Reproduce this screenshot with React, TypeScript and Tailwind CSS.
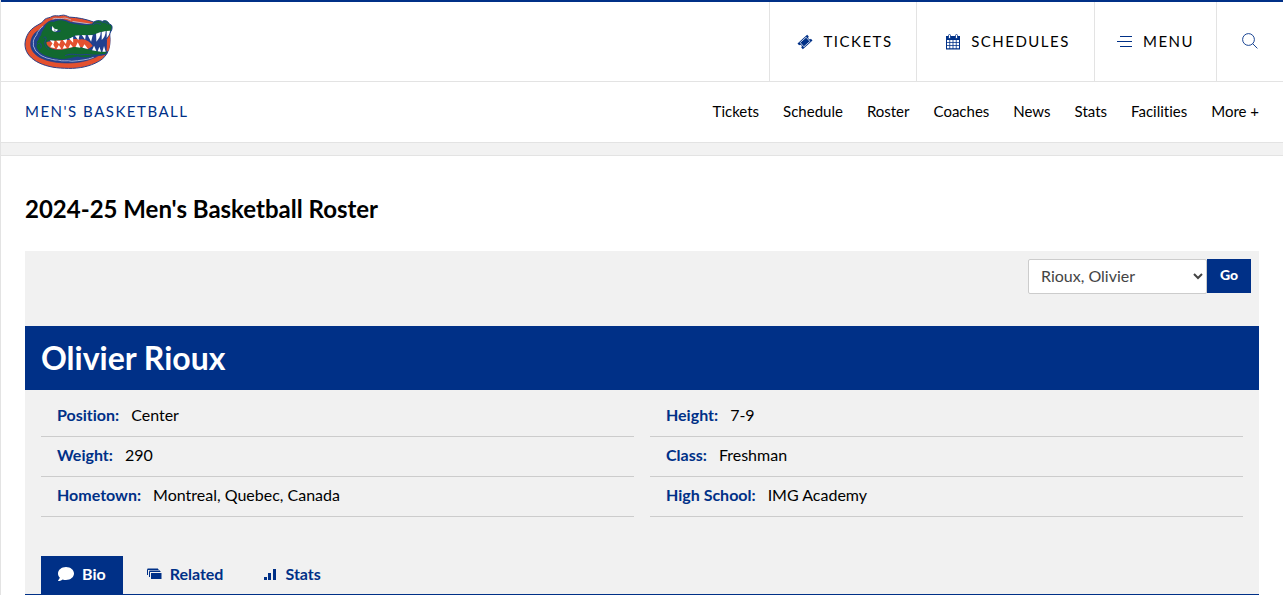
import { useState } from 'react';
import { FaComment } from 'react-icons/fa';

const subNav = [
  'Tickets',
  'Schedule',
  'Roster',
  'Coaches',
  'News',
  'Stats',
  'Facilities',
  'More +',
];

const details = [
  { label: 'Position', value: 'Center' },
  { label: 'Height', value: '7-9' },
  { label: 'Weight', value: '290' },
  { label: 'Class', value: 'Freshman' },
  { label: 'Hometown', value: 'Montreal, Quebec, Canada' },
  { label: 'High School', value: 'IMG Academy' },
];

function GatorLogo() {
  return (
    <svg viewBox="26 16 268 168" className="h-14 w-[89px]" aria-hidden="true">
      {/* Ring */}
      <path
        d="M29 106 C30 82 44 62 62 52 C76 44 84 40 88 32 C96 26 104 28 110 23 C120 18 128 24 138 20 C148 17 156 22 162 25 C188 26 212 31 236 40 L284 74 C290 128 272 150 240 164 C212 177 180 181 148 179 C82 178 28 150 29 106 Z"
        fill="#e4512f"
        stroke="#2b3f87"
        strokeWidth="3"
      />
      <path
        d="M46 106 C47 86 56 72 72 64 C84 54 90 44 104 37 C126 28 148 32 166 40 L230 48 L268 90 C272 124 260 140 234 149 C206 161 176 164 148 163 C90 161 46 142 46 106 Z"
        fill="#22408f"
        stroke="#2b3f87"
        strokeWidth="2"
      />
      {/* Scales along the back of the head */}
      <path
        d="M84 52 C74 58 72 66 66 72 C66 80 58 84 56 92 C52 98 56 104 54 112 C60 120 58 128 68 132 C74 142 86 144 94 148 C108 150 116 156 128 154 C142 160 156 154 170 158 C192 156 216 154 236 146"
        fill="none"
        stroke="#b9c6e2"
        strokeWidth="2.500"
      />
      <path
        d="M112 31 C124 25 132 33 142 29 C152 26 160 31 168 34 M172 38 L226 46"
        fill="none"
        stroke="#b9c6e2"
        strokeWidth="2.500"
      />
      {/* Head and lower jaw */}
      <path
        d="M90 50 C98 38 106 36 116 38 C130 31 146 31 162 41 C184 46 210 50 232 46 C236 36 250 33 262 38 C270 32 280 38 283 46 C291 47 293 54 290 64 L284 74 L276 92 L276 134 C270 140 256 140 240 140 C222 150 204 149 188 145 C166 149 146 156 126 151 C100 148 72 138 66 122 C58 112 66 106 64 98 C72 94 68 84 76 80 C76 68 84 64 90 50 Z"
        fill="#12692f"
        stroke="#22408f"
        strokeWidth="3"
      />
      {/* Mouth */}
      <path
        d="M96 99 C104 92 112 96 122 98 C138 98 146 94 158 91 C170 88 174 79 192 80 C214 78 232 82 248 73 C264 66 276 70 288 65 L274 129 C256 130 232 126 214 121 C196 114 184 113 170 116 C150 121 134 126 118 123 C102 118 92 110 96 99 Z"
        fill="#22408f"
      />
      <path
        d="M94 100 C116 96 138 94 160 94 C184 88 190 94 200 92 C218 94 226 102 233 112 L218 122 C198 113 182 113 164 118 C146 123 130 125 118 122 C102 118 92 109 94 100 Z"
        fill="#e4512f"
      />
      {/* Upper teeth */}
      <path
        d="M104 95 L118 96 L115 108 Z M123 96 L137 96 L132 107 Z M143 95 L156 92 L152 106 Z M162 90 L174 84 L174 102 Z M179 81 L193 80 L190 95 Z M200 79 L212 80 L210 93 Z M218 80 L233 79 L228 99 Z M243 75 L257 70 C257 83 251 91 244 99 Z M260 70 L272 67 C272 79 267 88 260 94 Z M275 67 L285 66 C284 76 280 82 275 88 Z"
        fill="#fff"
      />
      {/* Lower teeth */}
      <path
        d="M105 116 L112 104 L120 119 Z M124 121 L131 109 L138 120 Z M142 120 L148 108 L155 118 Z M160 118 L166 106 L173 115 Z M181 115 L188 101 L196 117 Z M202 117 L208 107 L219 121 Z M231 125 L237 111 L244 127 Z M248 128 L253 114 L258 129 Z M262 129 L267 112 L272 129 Z"
        fill="#fff"
      />
      {/* Ring in front of the open jaw */}
      <path
        d="M276 92 L284 78 C287 96 286 112 280 126 L275 128 Z"
        fill="#e4512f"
      />
      {/* Eye */}
      <path
        d="M106 54 C110 66 122 72 136 66"
        fill="none"
        stroke="#22408f"
        strokeWidth="4"
      />
      <path d="M111 52 L118 60 L128 62 C126 70 112 71 110 62 Z" fill="#fff" />
      <circle cx="119" cy="64" r="2" fill="#22408f" />
      {/* Nostrils, jaw lines and cheek */}
      <path
        d="M234 49 C240 40 248 44 257 47 M260 42 C266 37 274 42 279 47 M67 107 C74 98 82 110 76 119 M84 89 C90 80 96 88 90 97 C86 105 92 116 102 123 M150 141 C170 132 186 141 204 138 C226 136 242 144 266 137"
        fill="none"
        stroke="#22408f"
        strokeWidth="3"
      />
    </svg>
  );
}

function TicketIcon() {
  return (
    <svg viewBox="0 0 16 16" className="h-4 w-4" aria-hidden="true">
      <g transform="rotate(-42 8 8)">
        <path
          d="M1.500 4h13v2.400a1.600 1.600 0 0 0 0 3.200V12h-13V9.600a1.600 1.600 0 0 0 0-3.200z"
          fill="#003087"
        />
        <path d="M4 5.200h8v5.600H4z" fill="none" stroke="#fff" strokeWidth="0.700" />
      </g>
    </svg>
  );
}

function CalendarIcon() {
  return (
    <svg viewBox="0 0 16 16" className="h-4 w-4" aria-hidden="true">
      <path d="M1 2h14v13.500H1z" fill="#003087" />
      <path
        d="M2 6h2.400v2.300H2zM5.200 6h2.400v2.300H5.200zM8.400 6h2.400v2.300H8.400zM11.600 6H14v2.300h-2.400zM2 9h2.400v2.300H2zM5.200 9h2.400v2.300H5.200zM8.400 9h2.400v2.300H8.400zM11.600 9H14v2.300h-2.400zM2 12h2.400v2.300H2zM5.200 12h2.400v2.300H5.200zM8.400 12h2.400v2.300H8.400zM11.600 12H14v2.300h-2.400z"
        fill="#fff"
      />
      <path
        d="M3.500 1.500a1 1 0 0 1 2 0v2a1 1 0 0 1-2 0zM10.500 1.500a1 1 0 0 1 2 0v2a1 1 0 0 1-2 0z"
        fill="#fff"
        stroke="#003087"
        strokeWidth="0.800"
      />
    </svg>
  );
}

function MenuIcon() {
  return (
    <svg viewBox="0 0 16 12" className="h-3 w-4" aria-hidden="true">
      <path d="M3 .5h12M0 5.500h15M3 10.500h12" stroke="#003087" fill="none" />
    </svg>
  );
}

function SearchIcon() {
  return (
    <svg viewBox="0 0 16 16" className="h-4 w-4" aria-hidden="true">
      <g fill="none" stroke="#003087" strokeWidth="0.900">
        <circle cx="6.500" cy="6.500" r="5.900" />
        <path d="M10.700 10.700l4.700 4.700" />
      </g>
    </svg>
  );
}

function RelatedIcon() {
  return (
    <svg viewBox="0 0 15 12" className="h-3 w-[15px]" aria-hidden="true">
      <path d="M.5 7V1.500h11M2.500 9V3.500h11" fill="none" stroke="#003087" />
      <path d="M.5 1h10.500M2.500 3h10.500" stroke="#003087" />
      <path d="M4 5h10.500v6H4z" fill="#003087" />
    </svg>
  );
}

function StatsIcon() {
  return (
    <svg viewBox="0 0 14 11" className="h-[11px] w-3.5" aria-hidden="true">
      <path d="M1 8h3v3H1zM5 4h3v7H5zM10 0h3v11h-3z" fill="#003087" />
    </svg>
  );
}

const tabs = [
  { name: 'Bio', icon: <FaComment className="h-4 w-4" /> },
  { name: 'Related', icon: <RelatedIcon /> },
  { name: 'Stats', icon: <StatsIcon /> },
];

function Header() {
  return (
    <header className="border-t-2 border-[#003087]">
      <div className="flex h-20 items-stretch justify-between border-b border-[#e3e3e3]">
        <a href="#" aria-label="Florida Gators" className="flex items-center pl-[23px]">
          <GatorLogo />
        </a>
        <div className="flex text-[15px] tracking-[1.5px]">
          <button className="flex w-[147px] items-center justify-center gap-2.5 border-l border-[#e3e3e3] pl-1">
            <TicketIcon />
            TICKETS
          </button>
          <button className="flex w-[178px] items-center justify-center gap-2.5 border-l border-[#e3e3e3] pl-1">
            <CalendarIcon />
            SCHEDULES
          </button>
          <button className="flex w-[122px] items-center justify-center gap-2.5 border-l border-[#e3e3e3]">
            <MenuIcon />
            MENU
          </button>
          <button
            aria-label="Search"
            className="flex w-[67px] items-center justify-center border-l border-[#e3e3e3] pb-0.5"
          >
            <SearchIcon />
          </button>
        </div>
      </div>
      <div className="flex h-[61px] items-center justify-between border-b border-[#e3e3e3] px-6 pb-0.5 text-[15px]">
        <a href="#" className="tracking-[1.5px] text-[#003087]">
          MEN'S BASKETBALL
        </a>
        <nav className="flex gap-6">
          {subNav.map((item) => (
            <a key={item} href="#">
              {item}
            </a>
          ))}
        </nav>
      </div>
    </header>
  );
}

function App() {
  const [activeTab, setActiveTab] = useState('Bio');

  return (
    <div className="border-l border-[#e3e3e3] bg-white font-['Lato',sans-serif] text-black [font-variant-ligatures:none]">
      <Header />
      <div className="h-3 bg-[#f2f2f2]" />

      <main className="border-t border-[#e3e3e3] px-6 pt-[35px]">
        <h2 className="text-2xl leading-9 font-bold">2024-25 Men's Basketball Roster</h2>

        <section className="mt-6 bg-[#f1f1f1]">
          <form
            className="flex h-[75px] items-start justify-end p-2"
            onSubmit={(e) => e.preventDefault()}
          >
            <select
              aria-label="Choose a player"
              className="h-[35px] w-[179px] rounded-xs border border-[#ccc] bg-white pb-0.5 pl-2 text-base text-[#444]"
            >
              <option>Rioux, Olivier</option>
            </select>
            <button className="h-[34px] w-11 bg-[#003087] pb-0.5 text-sm font-black text-white">
              Go
            </button>
          </form>

          <h1 className="bg-[#003087] px-4 text-[32px] leading-16 font-bold text-white">
            Olivier Rioux
          </h1>

          <dl className="grid grid-cols-2 gap-x-4 px-4 pt-[7px]">
            {details.map((item) => (
              <div
                key={item.label}
                className="flex h-10 items-center gap-3 border-b border-[#ccc] px-4 pb-[3px]"
              >
                <dt className="font-bold text-[#003087]">{item.label}:</dt>
                <dd>{item.value}</dd>
              </div>
            ))}
          </dl>

          <div role="tablist" className="mt-[39px] flex border-b border-[#003087] px-4">
            {tabs.map((tab) => (
              <button
                key={tab.name}
                role="tab"
                aria-selected={activeTab === tab.name}
                onClick={() => setActiveTab(tab.name)}
                className={`flex h-[38px] items-center gap-2 pb-0.5 font-bold ${
                  activeTab === tab.name
                    ? 'mr-1 bg-[#003087] px-[17px] text-white'
                    : 'px-5 text-[#003087]'
                }`}
              >
                {tab.icon}
                {tab.name}
              </button>
            ))}
          </div>
        </section>
      </main>
    </div>
  );
}

export default App;
